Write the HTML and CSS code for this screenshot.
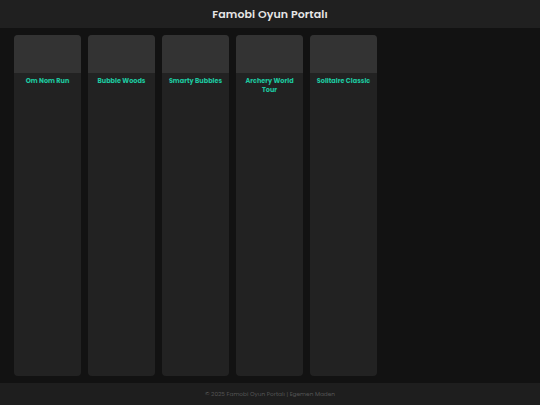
FILE: index.html
```html
<!DOCTYPE html>
<html lang="tr">
<head>
    <meta charset="UTF-8">
    <meta name="viewport" content="width=device-width, initial-scale=1.0">
    <title>Famobi Oyun Portalı</title>
    <link rel="stylesheet" href="styles.css">
</head>
<body>
    <header class="site-header">
        <h1>Famobi Oyun Portalı</h1>
    </header>
    <main class="game-list">
        <div class="game-card">
            <div class="game-thumb"></div>
            <div class="game-title">Om Nom Run</div>
        </div>
        <div class="game-card">
            <div class="game-thumb"></div>
            <div class="game-title">Bubble Woods</div>
        </div>
        <div class="game-card">
            <div class="game-thumb"></div>
            <div class="game-title">Smarty Bubbles</div>
        </div>
        <div class="game-card">
            <div class="game-thumb"></div>
            <div class="game-title">Archery World Tour</div>
        </div>
        <div class="game-card">
            <div class="game-thumb"></div>
            <div class="game-title">Solitaire Classic</div>
        </div>
    </main>
    <footer class="site-footer">
        © 2025 Famobi Oyun Portalı | Egemen Maden
    </footer>
</body>
</html>
```
FILE: styles.css
```css
body {
    font-family: Poppins, Inter, "Noto Sans", sans-serif;
    background: #121212;
    color: #ddd;
    margin: 0;
    height: 100vh;
    display: flex;
    flex-direction: column;
}
.site-header {
    background: #202020;
    height: 28px;
    display: flex;
    align-items: center;
    justify-content: center;
}
.site-header h1 {
    margin: 0;
    font-size: 11px;
    font-weight: 600;
    letter-spacing: 0.1px;
    color: #e6e6e6;
}
.game-list {
    flex: 1;
    display: flex;
    gap: 7px;
    padding: 7px 14px;
}
.game-card {
    width: 67px;
    background: #222;
    border-radius: 4px;
    overflow: hidden;
}
.game-thumb {
    height: 38px;
    background: #333;
}
.game-title {
    padding: 3px 6px;
    font-size: 6.5px;
    font-weight: 700;
    line-height: 9px;
    text-align: center;
    color: #1dc9a0;
}
.site-footer {
    background: #1e1e1e;
    height: 22px;
    display: flex;
    align-items: center;
    justify-content: center;
    font-size: 5.8px;
    color: #555;
}
```
